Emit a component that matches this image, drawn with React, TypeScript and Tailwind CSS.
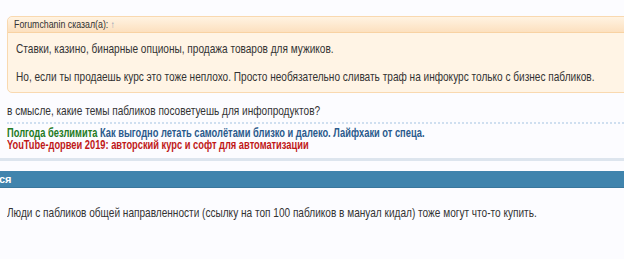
import React from "react";

const T = ({ children, className = "" }: { children: React.ReactNode; className?: string }) => (
  <span className={"inline-block whitespace-nowrap origin-left scale-x-[0.775] " + className}>{children}</span>
);

export default function App() {
  return (
    <div
      className="w-[624px] h-[259px] overflow-hidden bg-[#fcfcff] text-[#333]"
      style={{ fontFamily: '"Liberation Sans", Arial, sans-serif' }}
    >
      <div className="w-[680px]">
        <div className="pt-[16px] pl-[7px]">
          <div className="rounded-[5px] border border-[#f9d9b0] bg-[#fff4e5]">
            <div className="h-[16px] flex items-center pl-[6px] border-b border-[#f8d2a3] bg-gradient-to-b from-[#fff3e2] to-[#fce0bf] rounded-t-[5px] text-[11px] leading-[16px] text-[#333]">
              <span className="inline-block whitespace-nowrap origin-left scale-x-[0.8]">
                Forumchanin сказал(а): <span className="text-[#7a93b0] text-[10px]">↑</span>
              </span>
            </div>
            <div className="pl-[8px] pt-[8px] pb-[7px] text-[13px] leading-[16px]">
              <div>
                <T>Ставки, казино, бинарные опционы, продажа товаров для мужиков.</T>
              </div>
              <div className="mt-[12px]">
                <T>Но, если ты продаешь курс это тоже неплохо. Просто необязательно сливать траф на инфокурс только с бизнес пабликов.</T>
              </div>
            </div>
          </div>
          <div className="mt-[10px] text-[13px] leading-[16px]">
            <T>в смысле, какие темы пабликов посоветуешь для инфопродуктов?</T>
          </div>
          <div className="mt-[3px] border-t-2 border-dotted border-[#cfdff0]" />
          <div className="mt-[3px] text-[12px] leading-[12px] font-bold">
            <div>
              <T>
                <span className="text-[#237a23]">Полгода безлимита</span>{" "}
                <span className="text-[#2a5a8c]">Как выгодно летать самолётами близко и далеко. Лайфхаки от спеца.</span>
              </T>
            </div>
            <div>
              <T className="text-[#c01818]">YouTube-дорвеи 2019: авторский курс и софт для автоматизации</T>
            </div>
          </div>
        </div>
        <div className="mt-[7px] h-[3px] bg-[#dde5ee]" />
        <div className="mt-[10px] h-[17px] bg-[#4084ad] border-b border-[#3a779c] text-white text-[11px] font-bold leading-[17px] -indent-[1px]">
          ся
        </div>
        <div className="pl-[7px] mt-[17px] text-[13px] leading-[16px]">
          <T>Люди с пабликов общей направленности (ссылку на топ 100 пабликов в мануал кидал) тоже могут что-то купить.</T>
        </div>
      </div>
    </div>
  );
}
